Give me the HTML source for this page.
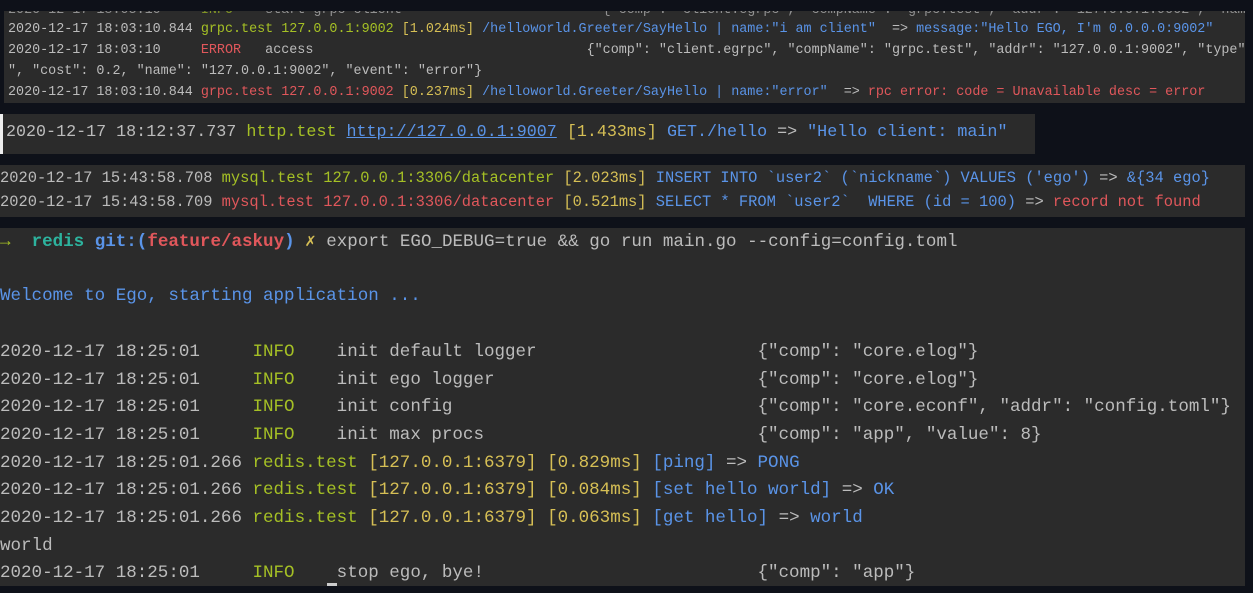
<!DOCTYPE html>
<html><head><meta charset="utf-8"><style>
body{margin:0;width:1253px;height:593px;background:#0e1119;overflow:hidden;position:relative;font-family:"Liberation Mono","DejaVu Sans Mono",monospace;}
.p{position:absolute;background:#2b2b2b;overflow:hidden}
.l{position:absolute;left:0;white-space:pre;color:#bcbcbc}
.g{color:#a5c025}.y{color:#d6bf55}.b{color:#5a94e8}.r{color:#e0575b}.t{color:#2db39e}.gb{color:#5a94e8}
</style></head><body>
<div class="p" style="left:4px;top:11px;width:1241px;height:92px;font-size:13.4px;">
<div class="l" style="left:4px;top:-8px;opacity:.7">2020-12-17 18:03:10     <span class="g">INFO</span>    start grpc client                         {"comp": "client.egrpc", "compName": "grpc.test", "addr": "127.0.0.1:9002", "name"</div>
<div class="l" style="left:4px;top:11px"><span>2020-12-17 18:03:10.844 </span><span class="g">grpc.test 127.0.0.1:9002 </span><span class="y">[1.024ms]</span><span class="b"> /helloworld.Greeter/SayHello | name:"i am client"  </span>=&gt; <span class="b">message:"Hello EGO, I'm 0.0.0.0:9002"</span></div>
<div class="l" style="left:4px;top:32px">2020-12-17 18:03:10     <span class="r">ERROR</span>   access                                  {"comp": "client.egrpc", "compName": "grpc.test", "addr": "127.0.0.1:9002", "type"</div>
<div class="l" style="left:4px;top:53px">", "cost": 0.2, "name": "127.0.0.1:9002", "event": "error"}</div>
<div class="l" style="left:4px;top:74px">2020-12-17 18:03:10.844 <span class="r">grpc.test 127.0.0.1:9002 </span><span class="y">[0.237ms]</span><span class="b"> /helloworld.Greeter/SayHello | name:"error"  </span>=&gt; <span class="r">rpc error: code = Unavailable desc = error</span></div>
</div>
<div class="p" style="left:0;top:114px;width:1035px;height:40px;font-size:16.7px;">
<div style="position:absolute;left:0;top:0;width:3px;height:40px;background:#eee"></div>
<div class="l" style="left:6px;top:9px">2020-12-17 18:12:37.737 <span class="g">http.test</span> <span class="b" style="text-decoration:underline">http://127.0.0.1:9007</span> <span class="y">[1.433ms]</span><span class="b"> GET./hello </span>=&gt;<span class="b"> "Hello client: main"</span></div>
</div>
<div class="p" style="left:0;top:165px;width:1245px;height:52px;font-size:15.4px;">
<div class="l" style="left:0;top:4px">2020-12-17 15:43:58.708 <span class="g">mysql.test 127.0.0.1:3306/datacenter </span><span class="y">[2.023ms]</span><span class="b"> INSERT INTO `user2` (`nickname`) VALUES ('ego') </span>=&gt; <span class="b">&amp;{34 ego}</span></div>
<div class="l" style="left:0;top:28px">2020-12-17 15:43:58.709 <span class="r">mysql.test 127.0.0.1:3306/datacenter </span><span class="y">[0.521ms]</span><span class="b"> SELECT * FROM `user2`  WHERE (id = 100) </span>=&gt; <span class="r">record not found</span></div>
</div>
<div class="p" style="left:0;top:228px;width:1245px;height:358px;font-size:17.55px;">
<div class="l" style="top:3px"><span class="g">→</span>  <span class="t" style="font-weight:bold">redis</span> <span class="gb" style="font-weight:bold">git:(</span><span class="r" style="font-weight:bold">feature/askuy</span><span class="gb" style="font-weight:bold">)</span> <span class="y">✗</span> export EGO_DEBUG=true &amp;&amp; go run main.go --config=config.toml</div>
<div class="l b" style="top:58px;color:#5a94e8">Welcome to Ego, starting application ...</div>
<div class="l" style="top:114px">2020-12-17 18:25:01     <span class="g">INFO</span>    init default logger                     {"comp": "core.elog"}</div>
<div class="l" style="top:142px">2020-12-17 18:25:01     <span class="g">INFO</span>    init ego logger                         {"comp": "core.elog"}</div>
<div class="l" style="top:169px">2020-12-17 18:25:01     <span class="g">INFO</span>    init config                             {"comp": "core.econf", "addr": "config.toml"}</div>
<div class="l" style="top:197px">2020-12-17 18:25:01     <span class="g">INFO</span>    init max procs                          {"comp": "app", "value": 8}</div>
<div class="l" style="top:225px">2020-12-17 18:25:01.266 <span class="g">redis.test </span><span class="y">[127.0.0.1:6379] [0.829ms]</span> <span class="b">[ping] </span>=&gt; <span class="b">PONG</span></div>
<div class="l" style="top:252px">2020-12-17 18:25:01.266 <span class="g">redis.test </span><span class="y">[127.0.0.1:6379] [0.084ms]</span> <span class="b">[set hello world] </span>=&gt; <span class="b">OK</span></div>
<div class="l" style="top:280px">2020-12-17 18:25:01.266 <span class="g">redis.test </span><span class="y">[127.0.0.1:6379] [0.063ms]</span> <span class="b">[get hello] </span>=&gt; <span class="b">world</span></div>
<div class="l" style="top:308px">world</div>
<div class="l" style="top:335px">2020-12-17 18:25:01     <span class="g">INFO</span>    stop ego, bye!                          {"comp": "app"}</div>
<div style="position:absolute;left:327px;top:355px;width:10px;height:3px;background:#ccc"></div>
</div>
</body></html>
